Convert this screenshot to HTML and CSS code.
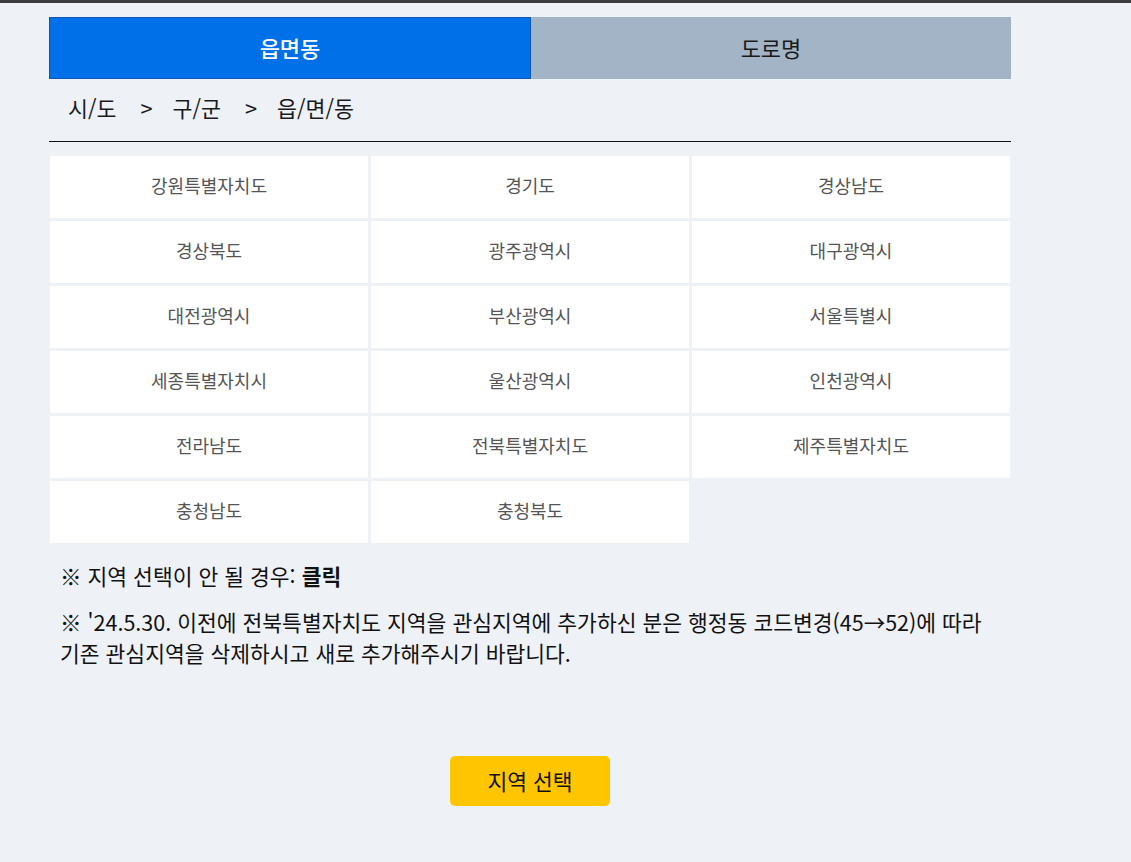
FILE: index.html
```html
<!DOCTYPE html>
<html lang="ko">
<head>
    <meta charset="UTF-8">
    <meta name="viewport" content="width=device-width, initial-scale=1.0">
    <title>지역 선택</title>
    <link rel="stylesheet" href="styles.css">
</head>
<body>
    <div class="top-bar"></div>
    <div class="area-wrap">
        <div class="tabs">
            <div class="tab active">읍면동</div>
            <div class="tab">도로명</div>
        </div>
        <div class="crumbs">
            <span>시/도</span>
            <span class="sep">&gt;</span>
            <span>구/군</span>
            <span class="sep">&gt;</span>
            <span>읍/면/동</span>
        </div>
        <ul class="region-list">
            <li>강원특별자치도</li>
            <li>경기도</li>
            <li>경상남도</li>
            <li>경상북도</li>
            <li>광주광역시</li>
            <li>대구광역시</li>
            <li>대전광역시</li>
            <li>부산광역시</li>
            <li>서울특별시</li>
            <li>세종특별자치시</li>
            <li>울산광역시</li>
            <li>인천광역시</li>
            <li>전라남도</li>
            <li>전북특별자치도</li>
            <li>제주특별자치도</li>
            <li>충청남도</li>
            <li>충청북도</li>
        </ul>
        <p class="note">※ 지역 선택이 안 될 경우: <b>클릭</b></p>
        <p class="note">※ '24.5.30. 이전에 전북특별자치도 지역을 관심지역에 추가하신 분은 행정동 코드변경(45→52)에 따라<br>기존 관심지역을 삭제하시고 새로 추가해주시기 바랍니다.</p>
        <div class="actions">
            <button class="btn-select">지역 선택</button>
        </div>
    </div>
</body>
</html>
```

FILE: styles.css
```css
body {
    margin: 0;
    background: #eef1f6;
    font-family: 'Noto Sans CJK KR', 'Noto Sans', sans-serif;
    color: #111;
}

.top-bar {
    height: 3px;
    background: #3c3c3c;
}

.area-wrap {
    width: 962px;
    margin: 14px 0 0 49px;
}

.tabs {
    display: flex;
    height: 62px;
}

.tab {
    flex: 1;
    display: flex;
    align-items: center;
    justify-content: center;
    padding-bottom: 2px;
    background: #a4b4c7;
    color: #1a1a1a;
    font-size: 22px;
}

.tab.active {
    background: #0070e9;
    border: 1px solid #0a57b8;
    color: #fff;
    font-weight: 500;
}

.crumbs {
    height: 63px;
    box-sizing: border-box;
    display: flex;
    align-items: center;
    padding: 0 0 5px 19px;
    border-bottom: 1px solid #111;
    font-size: 21.7px;
    color: #1a1a1a;
}

.crumbs .sep {
    margin: 0 20px 0 24px;
}

.region-list {
    list-style: none;
    margin: 14px 1px 0;
    padding: 0;
    display: grid;
    grid-template-columns: repeat(3, 1fr);
    gap: 3px;
}

.region-list li {
    height: 62px;
    box-sizing: border-box;
    display: flex;
    align-items: center;
    justify-content: center;
    padding-bottom: 4px;
    background: #fff;
    color: #555;
    font-size: 18px;
}

.note {
    margin: 17px 0 0 11px;
    font-size: 21.5px;
    line-height: 31px;
    color: #111;
}

.note + .note {
    margin-top: 15px;
}

.note b {
    font-weight: 700;
}

.actions {
    display: flex;
    justify-content: center;
    margin-top: 88px;
}

.btn-select {
    width: 160px;
    height: 50px;
    padding-bottom: 3px;
    border: 0;
    border-radius: 5px;
    background: #ffc600;
    color: #111;
    font-family: inherit;
    font-size: 21.5px;
}
```
